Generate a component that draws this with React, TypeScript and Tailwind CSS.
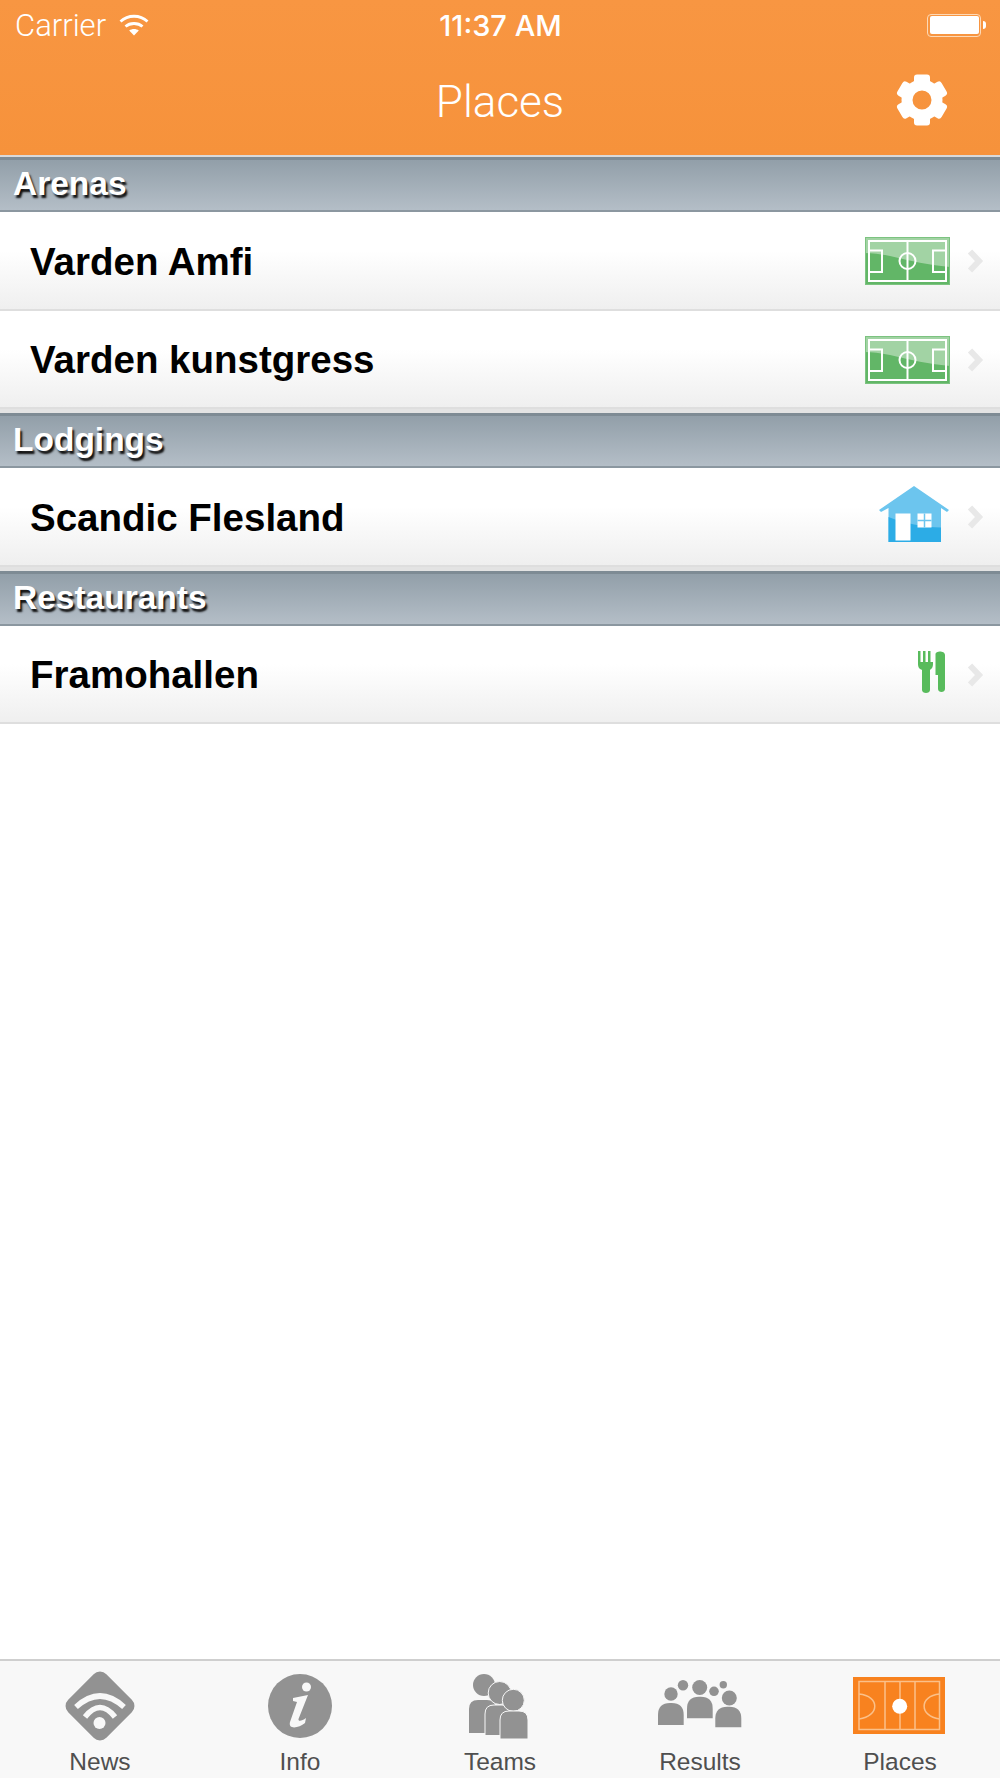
const SANS = "font-['Liberation_Sans',Arial,sans-serif]";

function Gear() {
  return (
    <svg width="52" height="52" viewBox="-26 -26 52 52" className="block">
      {[0, 60, 120, 180, 240, 300].map((a) => (
        <rect key={a} x="-8" y="-25.5" width="16" height="14" rx="3" fill="#fff" transform={`rotate(${a})`} />
      ))}
      <circle r="15" fill="none" stroke="#fff" strokeWidth="11" />
    </svg>
  );
}

function Wifi() {
  return (
    <svg width="30" height="22" viewBox="0 0 30 22" className="block">
      <path d="M1.5 7.5C9 0.5 21 0.5 28.5 7.5" fill="none" stroke="#fff" strokeWidth="2.8" />
      <path d="M6.5 12.5C11 8.5 19 8.5 23.5 12.5" fill="none" stroke="#fff" strokeWidth="2.8" />
      <path d="M15 21.5L10.2 16.5C13 14.5 17 14.5 19.8 16.5Z" fill="#fff" />
    </svg>
  );
}

function Battery() {
  return (
    <div className="flex items-center">
      <div className="w-[54px] h-[23px] rounded-[4px] border border-[#fdd9b6] p-[1.5px]">
        <div className="w-full h-full rounded-[2px] bg-white" />
      </div>
      <div className="w-[3px] h-[8px] ml-[2px] rounded-r-[4px] bg-white" />
    </div>
  );
}

function Pitch() {
  return (
    <svg width="85" height="48" viewBox="0 0 85 48" className="block">
      <rect width="85" height="48" fill="#62b667" />
      <path d="M0 0H85V30C65 28 45 24 25 19C15 17 7 16 0 16Z" fill="#a2d3a4" />
      <rect x="0.5" y="0.5" width="84" height="47" fill="none" stroke="#7cc380" />
      <rect x="4" y="4" width="77" height="40" fill="none" stroke="#fff" strokeWidth="2" />
      <path d="M42.5 4V44" stroke="#fff" strokeWidth="2" />
      <circle cx="42.5" cy="24" r="8" fill="none" stroke="#fff" strokeWidth="2" />
      <path d="M4 13.5H17V35H4M81 13.5H68V35H81" fill="none" stroke="#fff" strokeWidth="2" />
    </svg>
  );
}

function House() {
  return (
    <svg width="70" height="56" viewBox="0 0 70 56" className="block mb-[6px]">
      <path d="M0 24L35 0L70 24L68 26L62 22V56H9.500V22L2 26Z" fill="#6cc5ee" />
      <path d="M9.500 31C25 37 45 41.500 62 41.500V56H9.500Z" fill="#2cace6" />
      <rect x="16.500" y="27.500" width="15" height="27" fill="#fff" />
      <rect x="38.500" y="27.500" width="14" height="14" fill="#fff" />
      <path d="M45.500 27.500V41.500M38.500 34.500H52.500" stroke="#6cc5ee" strokeWidth="1.500" />
    </svg>
  );
}

function Cutlery() {
  return (
    <svg width="27" height="42" viewBox="0 0 27 42" className="block mb-[6px]">
      <path d="M0 0H2.500V11H5V0H7.500V11H10V0H12.500V11H15V0H15V13C15 17 13 18 12 19V39C12 43 4 43 4 39V19C2 18 0 17 0 13Z" fill="#58bb5c" />
      <path d="M17.500 3C17.500 -0.500 27 -0.500 27 4V38C27 42 20 42 20 38V24H17.500Z" fill="#58bb5c" />
    </svg>
  );
}

function Chevron() {
  return (
    <svg width="17" height="24" viewBox="0 0 17 24" className="block">
      <path d="M3 2.500L12 12L3 21.500" fill="none" stroke="#e8e8e8" strokeWidth="6" />
    </svg>
  );
}

function SectionHeader({ label }: { label: string }) {
  return (
    <div className="h-[55px] border-t-[3px] border-b-[2px] border-t-[#7e8b94] border-b-[#8b97a0] bg-gradient-to-b from-[#929fa9] to-[#b4bec7] flex items-center pl-[13px] pb-[2px]">
      <span className={`${SANS} text-[33.500px] font-bold text-white leading-none [text-shadow:2px_3px_2px_#111]`}>{label}</span>
    </div>
  );
}

function Row({ label, icon, iconMargin }: { label: string; icon: React.ReactNode; iconMargin: string }) {
  return (
    <div className="h-[98.500px] pt-[2px] border-b-[2px] border-[#dedede] bg-gradient-to-b from-white from-40% to-[#efefef] flex items-center pl-[30px] pr-[16px]">
      <span className={`${SANS} flex-1 pt-[1px] text-[38.500px] font-bold text-black leading-none`}>{label}</span>
      {icon}
      <div className={iconMargin}>
        <Chevron />
      </div>
    </div>
  );
}

const G = "#929292";
const BG = "#f8f8f8";

function NewsIcon() {
  return (
    <svg width="70" height="70" viewBox="0 0 70 70" className="block">
      <rect x="8" y="8" width="54" height="54" rx="9" transform="rotate(45 35 35)" fill={G} />
      <path d="M11 36Q35 14 59 36" fill="none" stroke={BG} strokeWidth="5.500" />
      <path d="M20 46Q35 27 50 46" fill="none" stroke={BG} strokeWidth="5.500" />
      <circle cx="34.500" cy="52" r="6" fill={BG} />
    </svg>
  );
}

function InfoIcon() {
  return (
    <svg width="64" height="64" viewBox="0 0 64 64" className="block">
      <circle cx="32" cy="32" r="32" fill={G} />
      <circle cx="38.500" cy="13" r="4.500" fill={BG} />
      <path d="M25 24L40 21L30.500 45C30 48 34 47 38 44L37 49C31 54 20 56 22 48L29 28L25 27Z" fill={BG} />
    </svg>
  );
}

function TeamsIcon() {
  const body = (x: number, y: number, w: number, h: number) =>
    `M${x} ${y + h}V${y + 9}Q${x} ${y} ${x + 9} ${y}H${x + w - 9}Q${x + w} ${y} ${x + w} ${y + 9}V${y + h}Z`;
  return (
    <svg width="59" height="65" viewBox="0 0 59 65" className="block mr-[4px]">
      <circle cx="15" cy="11" r="11" fill={G} />
      <path d={body(0, 26, 27, 33)} fill={G} />
      <circle cx="30.700" cy="19" r="11.500" fill={G} stroke={BG} strokeWidth="1" />
      <path d={body(16, 31, 26, 30.500)} fill={G} stroke={BG} strokeWidth="1" />
      <circle cx="44.300" cy="26.300" r="11" fill={G} stroke={BG} strokeWidth="1" />
      <path d={body(31, 37, 28, 28)} fill={G} stroke={BG} strokeWidth="1" />
    </svg>
  );
}

function ResultsIcon() {
  const body = (x: number, y: number, w: number, h: number) =>
    `M${x} ${y + h}V${y + 12}Q${x} ${y} ${x + 12} ${y}H${x + w - 12}Q${x + w} ${y} ${x + w} ${y + 12}V${y + h}Z`;
  return (
    <svg width="84" height="48" viewBox="0 0 84 48" className="block mb-[4px]">
      <circle cx="13" cy="14" r="6.700" fill={G} />
      <circle cx="25" cy="5.200" r="5.200" fill={G} />
      <circle cx="41.700" cy="7.500" r="7.500" fill={G} />
      <circle cx="56" cy="11.300" r="4.800" fill={G} />
      <circle cx="65.300" cy="4.700" r="3.700" fill={G} />
      <circle cx="71.300" cy="18" r="7.500" fill={G} />
      <path d={body(0, 23, 25.700, 22)} fill={G} />
      <path d={body(29, 16.700, 25.700, 21.600)} fill={G} />
      <path d={body(57.300, 26.700, 26, 20.600)} fill={G} />
    </svg>
  );
}

function PlacesIcon() {
  const L = "#fbc089";
  return (
    <svg width="92" height="57" viewBox="0 0 92 57" className="block mb-[2px] mr-[2px]">
      <rect width="92" height="57" fill="#f8821f" />
      <rect x="6" y="4.500" width="80.500" height="48" fill="none" stroke={L} strokeWidth="1.500" />
      <path d="M32 4.500V52.500M47 4.500V52.500M62 4.500V52.500" stroke={L} strokeWidth="1.500" />
      <path d="M6 17C27 19 27 39 6 42M86.500 17C66 19 66 39 86.500 42" fill="none" stroke={L} strokeWidth="1.500" />
      <circle cx="46.700" cy="29.300" r="7.500" fill="#fff" />
    </svg>
  );
}

function Tab({ label, icon }: { label: string; icon: React.ReactNode }) {
  return (
    <div className="flex flex-col items-center pt-[6px]">
      <div className="h-[79px] flex items-center justify-center pb-[1px]">{icon}</div>
      <span className={`${SANS} text-[24.500px] leading-[32px] text-[#4f4f4f]`}>{label}</span>
    </div>
  );
}

export default function App() {
  return (
    <div className={`${SANS} w-[1000px] h-[1778px] flex flex-col bg-white overflow-hidden`}>
      <header className="h-[155px] bg-gradient-to-b from-[#f89642] to-[#f6923b] text-white">
        <div className="h-[50px] grid grid-cols-[1fr_auto_1fr] items-center pl-[15px] pr-[14px]">
          <div className="flex items-center gap-[13px]">
            <span className="text-[31px] leading-none font-['Roboto',sans-serif] font-light">Carrier</span>
            <Wifi />
          </div>
          <span className="text-[29px] leading-none font-medium font-['Inter',sans-serif]">11:37 AM</span>
          <div className="justify-self-end">
            <Battery />
          </div>
        </div>
        <div className="h-[105px] grid grid-cols-[1fr_auto_1fr] items-center pb-[2px]">
          <div />
          <span className="text-[44px] leading-none font-['Roboto',sans-serif] font-light">Places</span>
          <div className="justify-self-end mr-[52px] mb-[3px]">
            <Gear />
          </div>
        </div>
      </header>
      <div className="h-[2px] bg-[#d9d9d9]" />
      <SectionHeader label="Arenas" />
      <Row label="Varden Amfi" icon={<Pitch />} iconMargin="ml-[17px]" />
      <Row label="Varden kunstgress" icon={<Pitch />} iconMargin="ml-[17px]" />
      <div className="h-[4px] bg-[#e3e3e3]" />
      <SectionHeader label="Lodgings" />
      <Row label="Scandic Flesland" icon={<House />} iconMargin="ml-[18px]" />
      <div className="h-[4px] bg-[#e3e3e3]" />
      <SectionHeader label="Restaurants" />
      <Row label="Framohallen" icon={<Cutlery />} iconMargin="ml-[22px]" />
      <div className="flex-1" />
      <nav className="h-[119px] border-t-[2px] border-[#cfcfcf] bg-[#f8f8f8] grid grid-cols-5">
        <Tab label="News" icon={<NewsIcon />} />
        <Tab label="Info" icon={<InfoIcon />} />
        <Tab label="Teams" icon={<TeamsIcon />} />
        <Tab label="Results" icon={<ResultsIcon />} />
        <Tab label="Places" icon={<PlacesIcon />} />
      </nav>
    </div>
  );
}
